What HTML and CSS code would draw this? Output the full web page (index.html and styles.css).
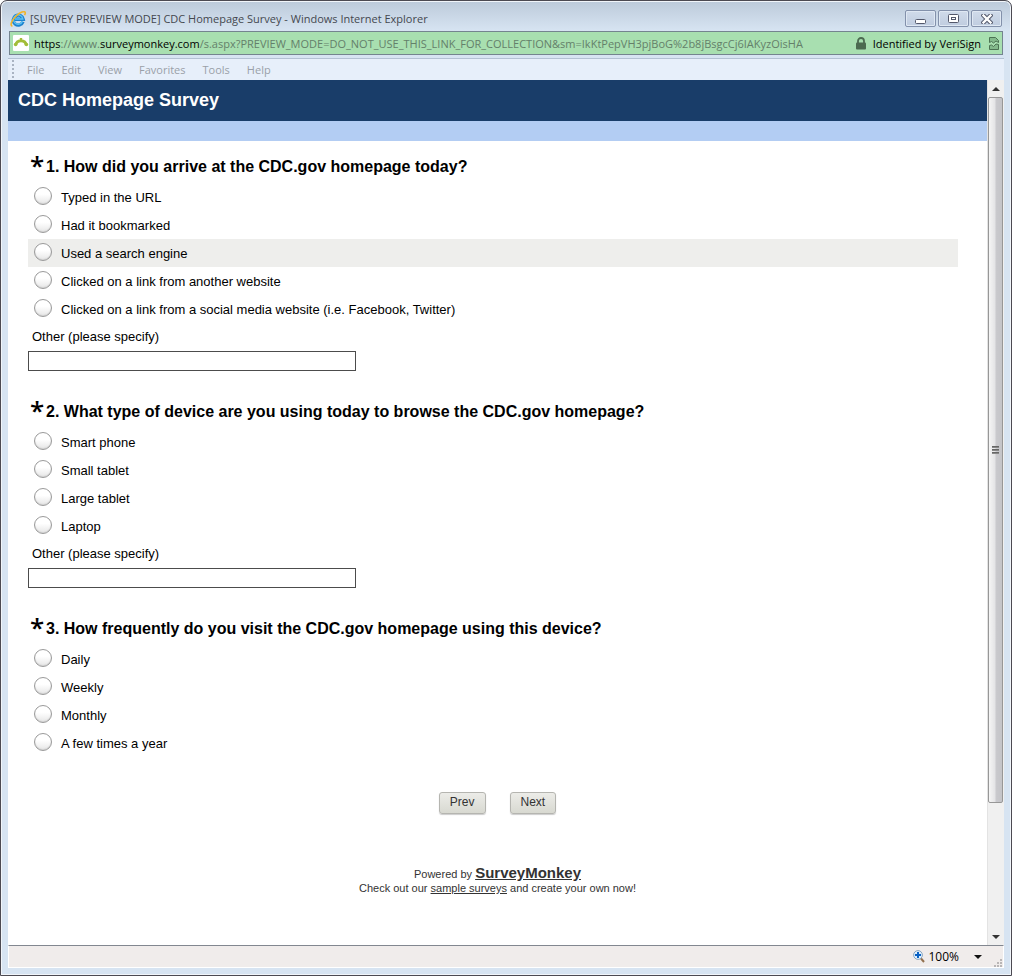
FILE: index.html
```html
<!DOCTYPE html>
<html lang="en">
<head>
  <meta charset="UTF-8" />
  <meta name="viewport" content="width=device-width, initial-scale=1.0" />
  <title>CDC Homepage Survey</title>
  <link rel="stylesheet" href="styles.css">
</head>
<body>
  <div class="window">
    <header class="title-bar">
      <svg class="ie-icon" viewBox="0 0 16 16" aria-hidden="true">
        <path d="M13 10.800A5 5 0 1 1 13.200 8.200H5" fill="none" stroke="#1d83cf" stroke-width="3.400" />
        <path d="M12.500 10.300A4.700 4.700 0 1 1 12.800 8H5" fill="none" stroke="#5cc1f2" stroke-width="1.400" />
        <path d="M2.400 15.200C-.6 14.400 2 9 6.200 5 10 1.400 14.600-.6 15.200 1.400c.3.900-.2 2-.7 2.800" fill="none" stroke="#efb52c" stroke-width="1.600" />
      </svg>
      <span class="window-title">[SURVEY PREVIEW MODE] CDC Homepage Survey - Windows Internet Explorer</span>
      <div class="window-buttons">
        <button type="button" aria-label="Minimize">
          <svg viewBox="0 0 12 10"><rect x=".5" y="5.500" width="10" height="4" rx="1" fill="#fff" stroke="#53586b" /></svg>
        </button>
        <button type="button" aria-label="Restore">
          <svg viewBox="0 0 12 10"><rect x=".5" y=".5" width="10" height="8" rx="1" fill="#fff" stroke="#53586b" /><rect x="3.500" y="3.500" width="4" height="2" fill="#fff" stroke="#53586b" /></svg>
        </button>
        <button type="button" aria-label="Close">
          <svg viewBox="0 0 12 10"><path d="M2.500 1.500l7 7M9.500 1.500l-7 7" stroke="#53586b" stroke-width="4.400" stroke-linecap="square" /><path d="M2.500 1.500l7 7M9.500 1.500l-7 7" stroke="#fff" stroke-width="2.400" stroke-linecap="square" /></svg>
        </button>
      </div>
    </header>

    <div class="address-bar">
      <svg class="favicon" viewBox="0 0 16 16" aria-hidden="true">
        <rect width="16" height="16" rx="1" fill="#fff" />
        <path d="M2.800 10C3.500 4.500 12.500 4.500 13.200 10" fill="none" stroke="#a2bd38" stroke-width="2.800" />
        <circle cx="2.600" cy="9.500" r="1.800" fill="#a2bd38" /><circle cx="13.400" cy="9.500" r="1.800" fill="#a2bd38" />
        <path d="M8 3v4" stroke="#a2bd38" stroke-width="2.400" />
      </svg>
      <span class="url"><b>https</b>://www.<b>surveymonkey.com</b>/s.aspx?PREVIEW_MODE=DO_NOT_USE_THIS_LINK_FOR_COLLECTION&amp;sm=IkKtPepVH3pjBoG%2b8jBsgcCj6IAKyzOisHA</span>
      <svg class="lock" viewBox="0 0 12 13" aria-hidden="true">
        <path d="M3 6V4a3 3 0 0 1 6 0v2" fill="none" stroke="#4c6b50" stroke-width="1.800" />
        <rect x="1" y="5.500" width="10" height="7" rx="1" fill="#4c6b50" />
      </svg>
      <span class="identity">Identified by VeriSign</span>
      <svg class="compat" viewBox="0 0 10 13" aria-hidden="true">
        <path d="M.5 5.500V.5h6l3 3v2L7 4 4.500 6 2.500 4.500zM.5 8.500v4h9v-5L7 7 4.500 9.500 2.500 8z" fill="#83b98b" stroke="#4c7353" />
      </svg>
    </div>

    <nav class="menu-bar">
      <button type="button">File</button>
      <button type="button">Edit</button>
      <button type="button">View</button>
      <button type="button">Favorites</button>
      <button type="button">Tools</button>
      <button type="button">Help</button>
    </nav>

    <div class="viewport">
      <main class="page">
        <h1>CDC Homepage Survey</h1>
        <div class="band"></div>
        <form class="survey">
          <fieldset class="question">
            <legend><span class="required">*</span>1. How did you arrive at the CDC.gov homepage today?</legend>
            <label class="choice"><input type="radio" name="q1">Typed in the URL</label>
            <label class="choice"><input type="radio" name="q1">Had it bookmarked</label>
            <label class="choice active"><input type="radio" name="q1">Used a search engine</label>
            <label class="choice"><input type="radio" name="q1">Clicked on a link from another website</label>
            <label class="choice"><input type="radio" name="q1">Clicked on a link from a social media website (i.e. Facebook, Twitter)</label>
            <label class="other" for="q1-other">Other (please specify)</label>
            <input class="other-text" type="text" id="q1-other">
          </fieldset>

          <fieldset class="question">
            <legend><span class="required">*</span>2. What type of device are you using today to browse the CDC.gov homepage?</legend>
            <label class="choice"><input type="radio" name="q2">Smart phone</label>
            <label class="choice"><input type="radio" name="q2">Small tablet</label>
            <label class="choice"><input type="radio" name="q2">Large tablet</label>
            <label class="choice"><input type="radio" name="q2">Laptop</label>
            <label class="other" for="q2-other">Other (please specify)</label>
            <input class="other-text" type="text" id="q2-other">
          </fieldset>

          <fieldset class="question">
            <legend><span class="required">*</span>3. How frequently do you visit the CDC.gov homepage using this device?</legend>
            <label class="choice"><input type="radio" name="q3">Daily</label>
            <label class="choice"><input type="radio" name="q3">Weekly</label>
            <label class="choice"><input type="radio" name="q3">Monthly</label>
            <label class="choice"><input type="radio" name="q3">A few times a year</label>
          </fieldset>
        </form>

        <div class="actions">
          <button type="button">Prev</button>
          <button type="button">Next</button>
        </div>

        <footer class="powered">
          <p>Powered by <a class="brand" href="#">SurveyMonkey</a></p>
          <p>Check out our <a href="#">sample surveys</a> and create your own now!</p>
        </footer>
      </main>

      <div class="scrollbar">
        <button type="button" aria-label="Scroll up"><svg viewBox="0 0 8 4"><path d="M0 4l4-4 4 4z" fill="#333" /></svg></button>
        <div class="track">
          <div class="thumb"><i></i><i></i><i></i></div>
        </div>
        <button type="button" aria-label="Scroll down"><svg viewBox="0 0 8 4"><path d="M0 0l4 4 4-4z" fill="#333" /></svg></button>
      </div>
    </div>

    <div class="status-bar">
      <button class="zoom" type="button">
        <svg class="magnifier" viewBox="0 0 12 13" aria-hidden="true">
          <path d="M8 8.500l3 3.500" stroke="#92704e" stroke-width="2" />
          <circle cx="5" cy="5" r="4.400" fill="#dcefff" stroke="#8aa5bd" />
          <path d="M5 2v6M2 5h6" stroke="#0a62c4" stroke-width="2" />
        </svg>
        100%
        <svg class="caret" viewBox="0 0 8 4" aria-hidden="true"><path d="M0 0l4 4 4-4z" fill="#111" /></svg>
      </button>
      <svg class="grip" viewBox="0 0 8 8" aria-hidden="true"><path d="M6 0h2v2H6zM3 3h2v2H3zM6 3h2v2H6zM0 6h2v2H0zM3 6h2v2H3zM6 6h2v2H6z" fill="#b9b6b6" /></svg>
    </div>
  </div>
</body>
</html>
```

FILE: styles.css
```css
* {
  box-sizing: border-box;
}
body {
  margin: 0;
  font-family: "Liberation Sans", Arial, sans-serif;
  font-size: 13px;
  color: #000;
  background: #fff;
}
button {
  font-family: inherit;
  margin: 0;
  padding: 0;
  border: none;
  background: none;
}
svg {
  display: block;
  flex: none;
}

/* window frame */
.window {
  display: flex;
  flex-direction: column;
  min-height: 100vh;
  padding: 1px 7px 7px;
  border: 1px solid #4c4a52;
  border-radius: 7px 7px 0 0;
  background: #d7e4f2;
  background-image: linear-gradient(#bccada, #d7e4f2 30px);
  box-shadow: inset 0 0 0 1px #f1f5fa;
}
.title-bar,
.address-bar,
.menu-bar,
.status-bar {
  font-family: "Open Sans", "Noto Sans", sans-serif;
  font-size: 11px;
}
.title-bar {
  display: flex;
  align-items: center;
  gap: 4px;
  height: 29px;
  padding: 4px 2px 0;
  color: #44484f;
}
.ie-icon {
  width: 16px;
  height: 16px;
}
.window-title {
  flex: 1;
  min-width: 0;
  overflow: hidden;
  white-space: nowrap;
}
.window-buttons {
  display: flex;
  gap: 2px;
}
.window-buttons button {
  display: flex;
  align-items: center;
  justify-content: center;
  width: 31px;
  height: 17px;
  border: 1px solid #8391ab;
  border-radius: 2px;
  background: linear-gradient(#d0dbea, #bfccdf);
  box-shadow: inset 0 0 0 1px #dfe8f3;
}
.window-buttons svg {
  width: 12px;
  height: 10px;
}

.address-bar {
  display: flex;
  align-items: center;
  height: 24px;
  margin: 0 1px;
  padding: 0 3px;
  border: 1px solid #74848f;
  background: #a8dfb0;
}
.favicon {
  width: 16px;
  height: 16px;
  margin-right: 5px;
}
.url {
  flex: 1;
  min-width: 0;
  overflow: hidden;
  white-space: nowrap;
  color: #64806a;
}
.url b {
  font-weight: normal;
  color: #000;
}
.lock {
  width: 12px;
  height: 13px;
  margin: 0 6px 0 8px;
}
.compat {
  width: 10px;
  height: 13px;
  margin-left: 8px;
}

.menu-bar {
  display: flex;
  align-items: center;
  gap: 13px;
  height: 22px;
  margin-top: 3px;
  padding-left: 15px;
  border-top: 1px solid #b3c1d3;
  background: radial-gradient(circle, #a9b3c2 1px, transparent 1px) 3px 0 / 4px 4px repeat-y, #e7effa;
}
.menu-bar button {
  padding: 0 0 0 4px;
  font-size: 11px;
  color: #9a9fa8;
}

/* survey page */
.viewport {
  display: flex;
  flex: 1;
}
.page {
  flex: 1;
  min-width: 0;
  background: #fff;
}
h1 {
  margin: 0;
  padding: 0 10px;
  font-size: 18px;
  line-height: 41px;
  color: #fff;
  background: #193d69;
}
.band {
  height: 20px;
  background: #b3cdf3;
}
.survey {
  padding: 16px 29px 0 20px;
}
.question {
  display: flex;
  flex-direction: column;
  min-width: 0;
  margin: 0 0 31px;
  padding: 0;
  border: none;
}
legend {
  display: flex;
  padding: 0 0 6px 2px;
  font-size: 16px;
  font-weight: bold;
  line-height: 20px;
}
.required {
  width: 16px;
  height: 20px;
  font-family: "Open Sans", sans-serif;
  font-size: 26px;
  font-weight: 600;
  line-height: 16px;
}
.choice {
  display: flex;
  align-items: center;
  gap: 9px;
  height: 28px;
  padding-left: 6px;
}
.choice.active {
  background: #eeeeec;
}
.choice input {
  appearance: none;
  width: 18px;
  height: 18px;
  margin: 0 0 2px;
  border: 1px solid #9a9a9a;
  border-radius: 50%;
  background: linear-gradient(#fff 40%, #e6e6e6);
  box-shadow: inset 0 -1px 1px #d5d5d5;
}
.choice input:checked {
  background: radial-gradient(circle, #333 4px, #f4f4f4 5px);
}
.other {
  padding-left: 4px;
  line-height: 28px;
}
.other-text {
  width: 328px;
  max-width: 100%;
  height: 20px;
  padding: 1px 3px;
  border: 1px solid #4c4c4c;
  background: #fff;
}

.actions {
  display: flex;
  justify-content: center;
  gap: 24px;
  padding-top: 4px;
}
.actions button {
  height: 22px;
  padding: 0 10px 2px;
  border: 1px solid #b5b5b0;
  border-radius: 3px;
  font-size: 12px;
  color: #333;
  background: linear-gradient(#ecece8, #d8d9d1);
  box-shadow: 0 1px 1px #ccc;
}
.powered {
  padding: 52px 0 20px;
  text-align: center;
  font-size: 11px;
  color: #333;
}
.powered p {
  margin: 0;
  line-height: 14px;
}
.powered a {
  color: #333;
}
.powered .brand {
  font-size: 15px;
  font-weight: bold;
}

/* scrollbar */
.scrollbar {
  display: flex;
  flex-direction: column;
  width: 17px;
  padding-right: 1px;
  border-left: 1px solid #e3e3e3;
  background: #f0f0f0;
}
.scrollbar button {
  display: flex;
  align-items: center;
  justify-content: center;
  height: 17px;
}
.scrollbar button svg {
  width: 8px;
  height: 4px;
}
.track {
  flex: 1;
  display: flex;
  flex-direction: column;
}
.thumb {
  display: flex;
  flex: 0 0 85%;
  flex-direction: column;
  align-items: center;
  justify-content: center;
  gap: 1px;
  border: 1px solid #979797;
  border-radius: 2px;
  background: linear-gradient(90deg, #f5f5f5, #e4e4e6 45%, #c9c9cd 55%, #c4c4c8);
}
.thumb i {
  width: 7px;
  height: 2px;
  background: linear-gradient(#555, #999);
}

.status-bar {
  display: flex;
  align-items: center;
  justify-content: flex-end;
  height: 23px;
  padding: 0 1px;
  border: 1px solid #fff;
  border-top: 1px solid #828790;
  background: #f0eceb;
}
.zoom {
  display: flex;
  align-items: center;
  gap: 3px;
  font-size: 12px;
}
.magnifier {
  width: 12px;
  height: 13px;
}
.caret {
  width: 8px;
  height: 4px;
  margin-left: 12px;
}
.grip {
  align-self: flex-end;
  width: 8px;
  height: 8px;
  margin-left: 12px;
}
```
